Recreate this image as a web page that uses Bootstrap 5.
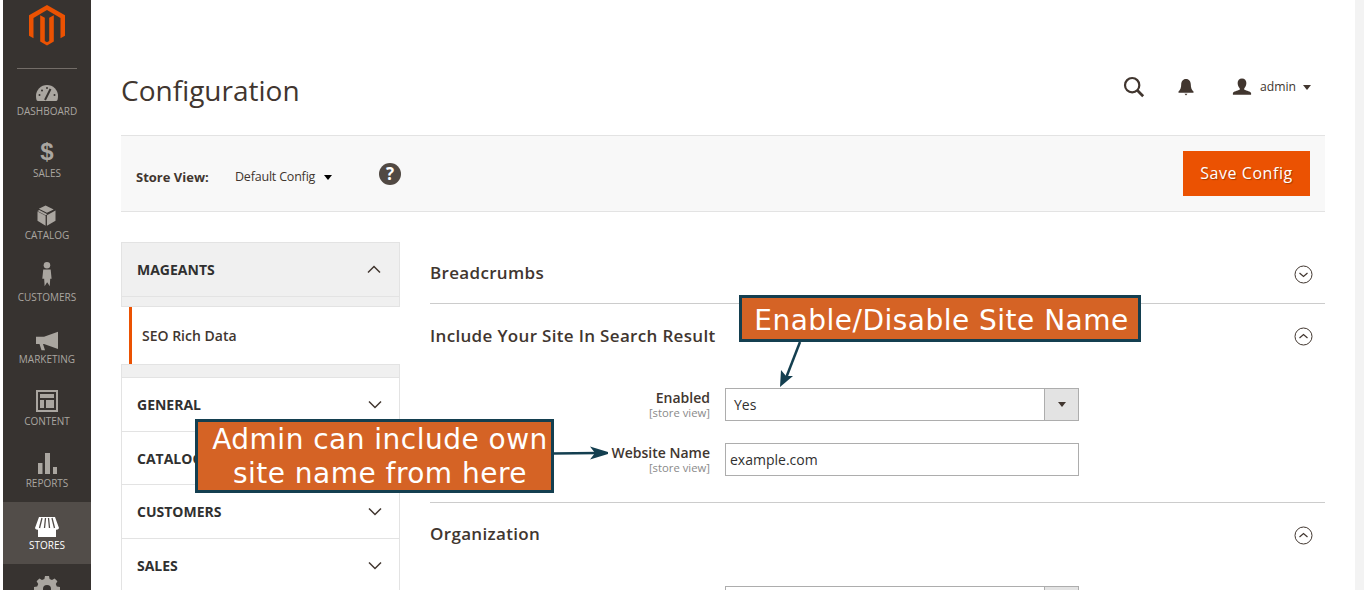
<!DOCTYPE html>
<html lang="en">
<head>
  <meta charset="UTF-8" />
  <meta name="viewport" content="width=device-width, initial-scale=1" />
  <title>Configuration</title>
  <link href="https://cdn.jsdelivr.net/npm/bootstrap@5.3.0/dist/css/bootstrap.min.css" rel="stylesheet" />
  <style>
    html, body { height: 590px; overflow: hidden; }
    body { font-family: "Open Sans", sans-serif; color: #303030; background: #fff; }
    .app-wrap { height: 590px; position: relative; padding-left: 3px; padding-right: 9px; }
    .page-gutter { position: absolute; top: 0; right: 0; bottom: 0; width: 9px; background: #f3f3f3; }

    /* left menu */
    .side-menu { width: 88px; flex: none; background: #373330; height: 590px; overflow: hidden; }
    .side-logo { height: 69px; padding-top: 5px; margin: 0 14px; border-bottom: 1px solid #736d68; text-align: center; }
    .side-item { height: 62px; display: flex; flex-direction: column; align-items: center; color: #aaa6a0; font-size: 10px; line-height: 14px; }
    .side-item svg { height: 26px; width: 30px; flex: none; overflow: visible; }
    .side-item-first { height: 61px; padding-top: 9px; }
    .side-item-norm { padding-top: 10px; }
    .side-item.is-active { background: #524d49; color: #fff; }

    /* top */
    .main-area { width: 1264px; padding: 0 30px; flex: none; }
    .top-row { height: 135px; padding-top: 72px; }
    .page-title { font-size: 28px; font-weight: 400; line-height: 36px; color: #41362f; margin: 0; }
    .top-icons { padding-top: 4px; padding-right: 14px; color: #41362f; }
    .admin-name { font-size: 12.2px; color: #41362f; margin-left: 8px; }
    .caret-dn { display: inline-block; border-left: 4px solid transparent; border-right: 4px solid transparent; border-top: 5px solid #41362f; }

    /* store bar */
    .store-bar { height: 77px; background: #f8f8f8; border-top: 1px solid #e3e3e3; border-bottom: 1px solid #e3e3e3; padding: 15px 15px; }
    .store-label { font-size: 13px; font-weight: 700; color: #41362f; width: 99px; margin-top: 8px; }
    .store-scope { font-size: 12.5px; color: #41362f; letter-spacing: -.2px; width: 97px; margin-top: 8px; }
    .help-dot { width: 22px; height: 22px; border-radius: 50%; background: #514943; color: #fff; font-weight: 700; font-size: 17px; line-height: 22px; text-align: center; margin-left: 47px; }
    .btn-save { width: 127px; height: 45px; background: #eb5202; color: #fff; font-size: 16px; font-weight: 500; border: 0; border-radius: 0; padding: 0 0 2px; text-shadow: 1px 1px 1px rgba(0,0,0,.3); letter-spacing: .55px; }
    .btn-save:hover { background: #eb5202; color: #fff; }

    /* config tabs */
    .content-row { margin-top: 30px; }
    .tabs-col { width: 279px; flex: none; margin-right: 30px; }
    .tab-head { height: 55px; padding: 0 18px 0 15px; font-size: 14px; font-weight: 700; color: #303030; }
    .tab-head-line { background: #f0f0f0; border: 1px solid #e3e3e3; }
    .tab-gap { height: 10px; background: #f0f0f0; border: 1px solid #e3e3e3; border-top: 0; }
    .tab-link { margin-left: 8px; height: 57px; background: #fff; border-left: 3px solid #eb5202; padding-left: 10px; font-size: 14px; font-weight: 600; color: #41362f; }
    .tab-strip { height: 14px; background: #f0f0f0; border: 1px solid #e3e3e3; }
    .tab-closed-wrap { border-left: 1px solid #e3e3e3; border-right: 1px solid #e3e3e3; }
    .tab-closed { height: 53.7px; background: #fff; border-bottom: 1px solid #e3e3e3; padding-left: 15px; padding-right: 17px; }

    /* config sections */
    .form-col { width: 895px; flex: none; }
    .sect-head { padding: 0 12px 0 0; font-size: 17px; font-weight: 600; color: #41362f; letter-spacing: .33px; }
    .sect-one { height: 62px; border-bottom: 1px solid #ccc; }
    .sect-one svg { margin-top: 3px; }
    .sect-two { height: 64px; }
    .sect-two svg { margin-top: 1px; }
    .sect-body { height: 135px; border-bottom: 1px solid #ccc; }
    .sect-three { height: 62px; }
    .sect-three svg { margin-top: 2px; }
    .field-row { height: 55px; }
    .field-label { width: 280px; flex: none; text-align: right; font-size: 14px; font-weight: 600; line-height: 16px; color: #41362f; padding-top: 2px; }
    .field-scope { display: block; font-size: 11.3px; font-weight: 400; color: #8a8a8a; line-height: 14px; }
    .field-box { width: 354px; height: 33px; margin-left: 15px; border: 1px solid #adadad; font-size: 14px; color: #303030; background: #fff; }
    .field-select-arrow { width: 34px; height: 31px; background: #e3e3e3; border-left: 1px solid #adadad; }

    /* tutorial callouts */
    .note-box { position: absolute; background: #d56325; border: 3px solid #143f50; color: #fff; font-family: "DejaVu Sans", sans-serif; font-size: 28px; text-align: center; white-space: nowrap; z-index: 5; }
    .note-site { left: 739px; top: 295px; width: 402px; height: 47px; letter-spacing: .48px; line-height: 45px; padding-left: 3px; }
    .note-admin { left: 195px; top: 419px; width: 359px; height: 74px; letter-spacing: .48px; line-height: 33.5px; padding-top: 1px; padding-left: 11px; }
    .note-arrow { position: absolute; z-index: 4; }
  </style>
</head>
<body>
<div class="app-wrap d-flex">
  <nav class="side-menu">
    <div class="side-logo">
      <svg width="36" height="41" viewBox="0 0 36 41"><path fill="#eb5202" d="M18 0 36 10.300v20.400l-4.500 2.600V12.900L18 5.100 4.500 12.900v20.400L0 30.700V10.300Z"/><path fill="#eb5202" d="M15.800 12.800v23.100L18 37.200l2.200-1.300V12.800l4.600-2.600V36.600L18 40.500 11.200 36.600V10.200Z"/></svg>
    </div>
    <a class="side-item side-item-first text-decoration-none">
      <svg viewBox="0 0 30 26"><path fill="#aaa6a0" d="M4 18a11 11 0 0 1 22 0c0 3-.5 5-2 5H6c-1.500 0-2-2-2-5Z"/><path stroke="#373330" stroke-width="2" d="M13 22 18.500 11"/><circle cx="7.500" cy="17" r="1" fill="#373330"/><circle cx="10" cy="12.500" r="1" fill="#373330"/><circle cx="15" cy="10" r="1" fill="#373330"/><circle cx="22.500" cy="17" r="1" fill="#373330"/></svg>
      DASHBOARD
    </a>
    <a class="side-item side-item-norm text-decoration-none">
      <svg viewBox="0 0 30 26"><text x="15" y="20" text-anchor="middle" font-family="Liberation Sans" font-weight="700" font-size="24" fill="#aaa6a0">$</text></svg>
      SALES
    </a>
    <a class="side-item side-item-norm text-decoration-none">
      <svg viewBox="0 0 30 26"><g transform="translate(1 2) scale(.9 .93)"><path fill="#aaa6a0" d="M14 12 5 7.500l2-1 9 4.500ZM15.500 9.500 6.500 5 14 1.500 23 6ZM15.500 12 25 7v11l-9.500 5.500ZM14 12.500 5 8v10l9 5.500Z"/></g></svg>
      CATALOG
    </a>
    <a class="side-item side-item-norm text-decoration-none">
      <svg viewBox="0 0 30 26"><g transform="translate(1 -2) scale(.93)"><circle cx="15" cy="3.500" r="3.500" fill="#aaa6a0"/><path fill="#aaa6a0" d="M11 8h8l1 10h-1.500l-.5 8-2.500-4-.5 0-2.500 4-.5-8H10Z"/></g></svg>
      CUSTOMERS
    </a>
    <a class="side-item side-item-norm text-decoration-none">
      <svg viewBox="0 0 30 26"><g transform="translate(0 4) scale(1 .9)"><path fill="#aaa6a0" d="M26 2v19L12 15.500h-1l2 7h-3.500l-2-7H4v-8h8Z"/></g></svg>
      MARKETING
    </a>
    <a class="side-item side-item-norm text-decoration-none">
      <svg viewBox="0 0 30 26"><path fill="#aaa6a0" d="M4 2h22v22H4Zm2 2v18h18V4Zm2 2h14v4H8Zm0 6h4v8H8Zm6 0h8v8h-8Z"/></svg>
      CONTENT
    </a>
    <a class="side-item side-item-norm text-decoration-none">
      <svg viewBox="0 0 30 26"><path fill="#aaa6a0" d="M6 13h4.500v11H6ZM13 3h5v21h-5ZM21 17h4v7h-4Z"/></svg>
      REPORTS
    </a>
    <a class="side-item side-item-norm is-active text-decoration-none">
      <svg viewBox="0 0 30 26"><g transform="translate(0 2)"><path fill="#fff" d="M7 3h16l4 11c-.5 1.500-2 2-3 1.500V23H6v-7.500c-1 .5-2.500 0-3-1.500Z"/><path stroke="#524d49" stroke-width="1.300" d="M10 4 7.500 14M13.500 4 12.500 14M16.500 4 17.500 14M20 4 22.500 14"/></g></svg>
      STORES
    </a>
    <a class="side-item side-item-norm text-decoration-none">
      <svg viewBox="0 0 30 26"><path fill="#aaa6a0" d="M13 2h4l.6 3 2.400 1 2.600-1.600 2.800 2.800L23.800 10l1 2.400 3.200.6v4l-3.200.6-1 2.400 1.600 2.800-2.800 2.800-2.600-1.600-2.400 1-.6 3h-4l-.6-3-2.400-1-2.600 1.600-2.800-2.800L6.200 20l-1-2.400L2 17v-4l3.200-.6 1-2.400-1.600-2.800 2.800-2.800L10 6l2.400-1Z"/><circle cx="15" cy="15" r="4" fill="#373330"/></svg>
    </a>
  </nav>

  <main class="main-area">
    <div class="top-row d-flex justify-content-between align-items-start">
      <h1 class="page-title">Configuration</h1>
      <div class="top-icons d-flex align-items-center">
        <svg width="22" height="22" viewBox="0 0 24 24"><circle cx="10" cy="10" r="7.800" fill="none" stroke="#41362f" stroke-width="2.400"/><path d="m15.500 15.500 6.500 6.500" stroke="#41362f" stroke-width="3"/></svg>
        <svg width="20" height="20" viewBox="0 0 20 20" style="margin-left:31px"><path fill="#41362f" d="M10 2c3.200 0 4.800 2.500 4.800 5.500 0 3.500 1 5.500 2.700 7v1.300h-15v-1.300c1.700-1.500 2.700-3.500 2.700-7C5.200 4.500 6.800 2 10 2ZM8.500 16.800h3L10 18.500Z"/></svg>
        <svg width="20" height="19" viewBox="0 0 22 20" style="margin-left:36px"><path fill="#41362f" d="M11 0c3 0 4.800 2 4.800 5 0 2.500-1 4.500-2.300 5.800v1.700c2.500 1 7 2 7.500 3.500v2H1v-2c.5-1.500 5-2.500 7.500-3.500v-1.700C7.200 9.500 6.200 7.500 6.200 5 6.200 2 8 0 11 0Z"/></svg>
        <span class="admin-name">admin</span>
        <span class="caret-dn" style="margin-left:7px"></span>
      </div>
    </div>

    <div class="store-bar d-flex justify-content-between">
      <div class="d-flex align-items-center" style="height:45px">
        <div class="store-label">Store View:</div>
        <div class="store-scope d-flex align-items-center justify-content-between">Default Config <span class="caret-dn" style="border-top-color:#000"></span></div>
        <div class="help-dot">?</div>
      </div>
      <button class="btn btn-save" type="button">Save Config</button>
    </div>

    <div class="content-row d-flex">
      <div class="tabs-col">
        <div class="tab-head tab-head-line d-flex justify-content-between align-items-center">MAGEANTS
          <svg width="14" height="9" viewBox="0 0 14 9"><path d="m1 7.500 6-6 6 6" fill="none" stroke="#41362f" stroke-width="1.500"/></svg>
        </div>
        <div class="tab-gap"></div>
        <div class="tab-link d-flex align-items-center">SEO Rich Data</div>
        <div class="tab-strip"></div>
        <div class="tab-closed-wrap">
          <div class="tab-head tab-closed d-flex justify-content-between align-items-center">GENERAL
            <svg width="14" height="9" viewBox="0 0 14 9"><path d="m1 1.500 6 6 6-6" fill="none" stroke="#41362f" stroke-width="1.500"/></svg>
          </div>
          <div class="tab-head tab-closed d-flex justify-content-between align-items-center">CATALOG
            <svg width="14" height="9" viewBox="0 0 14 9"><path d="m1 1.500 6 6 6-6" fill="none" stroke="#41362f" stroke-width="1.500"/></svg>
          </div>
          <div class="tab-head tab-closed d-flex justify-content-between align-items-center">CUSTOMERS
            <svg width="14" height="9" viewBox="0 0 14 9"><path d="m1 1.500 6 6 6-6" fill="none" stroke="#41362f" stroke-width="1.500"/></svg>
          </div>
          <div class="tab-head tab-closed d-flex justify-content-between align-items-center">SALES
            <svg width="14" height="9" viewBox="0 0 14 9"><path d="m1 1.500 6 6 6-6" fill="none" stroke="#41362f" stroke-width="1.500"/></svg>
          </div>
        </div>
      </div>

      <div class="form-col">
        <div class="sect-head sect-one d-flex justify-content-between align-items-center">Breadcrumbs
          <svg width="19" height="19" viewBox="0 0 19 19"><circle cx="9.500" cy="9.500" r="8.500" fill="none" stroke="#41362f"/><path d="m5.500 8 4 3.500 4-3.500" fill="none" stroke="#41362f" stroke-width="1.200"/></svg>
        </div>
        <div class="sect-head sect-two d-flex justify-content-between align-items-center">Include Your Site In Search Result
          <svg width="19" height="19" viewBox="0 0 19 19"><circle cx="9.500" cy="9.500" r="8.500" fill="none" stroke="#41362f"/><path d="m5.500 11 4-3.500 4 3.500" fill="none" stroke="#41362f" stroke-width="1.200"/></svg>
        </div>
        <div class="sect-body pt-3">
          <div class="field-row d-flex" style="margin-top:4px">
            <div class="field-label">Enabled<span class="field-scope">[store view]</span></div>
            <div class="field-box d-flex justify-content-between align-items-center ps-2">Yes
              <div class="field-select-arrow d-flex align-items-center justify-content-center"><span class="caret-dn"></span></div>
            </div>
          </div>
          <div class="field-row d-flex">
            <div class="field-label">Website Name<span class="field-scope">[store view]</span></div>
            <div class="field-box d-flex align-items-center" style="padding-left:4px">example.com</div>
          </div>
        </div>
        <div class="sect-head sect-three d-flex justify-content-between align-items-center">Organization
          <svg width="19" height="19" viewBox="0 0 19 19"><circle cx="9.500" cy="9.500" r="8.500" fill="none" stroke="#41362f"/><path d="m5.500 11 4-3.500 4 3.500" fill="none" stroke="#41362f" stroke-width="1.200"/></svg>
        </div>
        <div class="d-flex" style="margin-top:21px">
          <div class="field-label"></div>
          <div class="field-box d-flex justify-content-end"><div class="field-select-arrow"></div></div>
        </div>
      </div>
    </div>
  </main>

  <div class="page-gutter"></div>

  <div class="note-box note-site">Enable/Disable Site Name</div>
  <div class="note-box note-admin">Admin can include own<br>site name from here</div>
  <svg class="note-arrow" style="left:775px;top:340px" width="32" height="50" viewBox="0 0 32 50"><path d="M25 2 11 38" stroke="#143f50" stroke-width="2.500"/><path fill="#143f50" d="M5 47 6 30l5 6 7 0Z"/></svg>
  <svg class="note-arrow" style="left:552px;top:444px" width="56" height="18" viewBox="0 0 56 18"><path d="M0 9.500 46 9" stroke="#143f50" stroke-width="2.500"/><path fill="#143f50" d="M59 9 38 2.500l5 6.500-5 6.500Z"/></svg>
</div>

<script src="https://cdn.jsdelivr.net/npm/bootstrap@5.3.0/dist/js/bootstrap.bundle.min.js"></script>
</body>
</html>
